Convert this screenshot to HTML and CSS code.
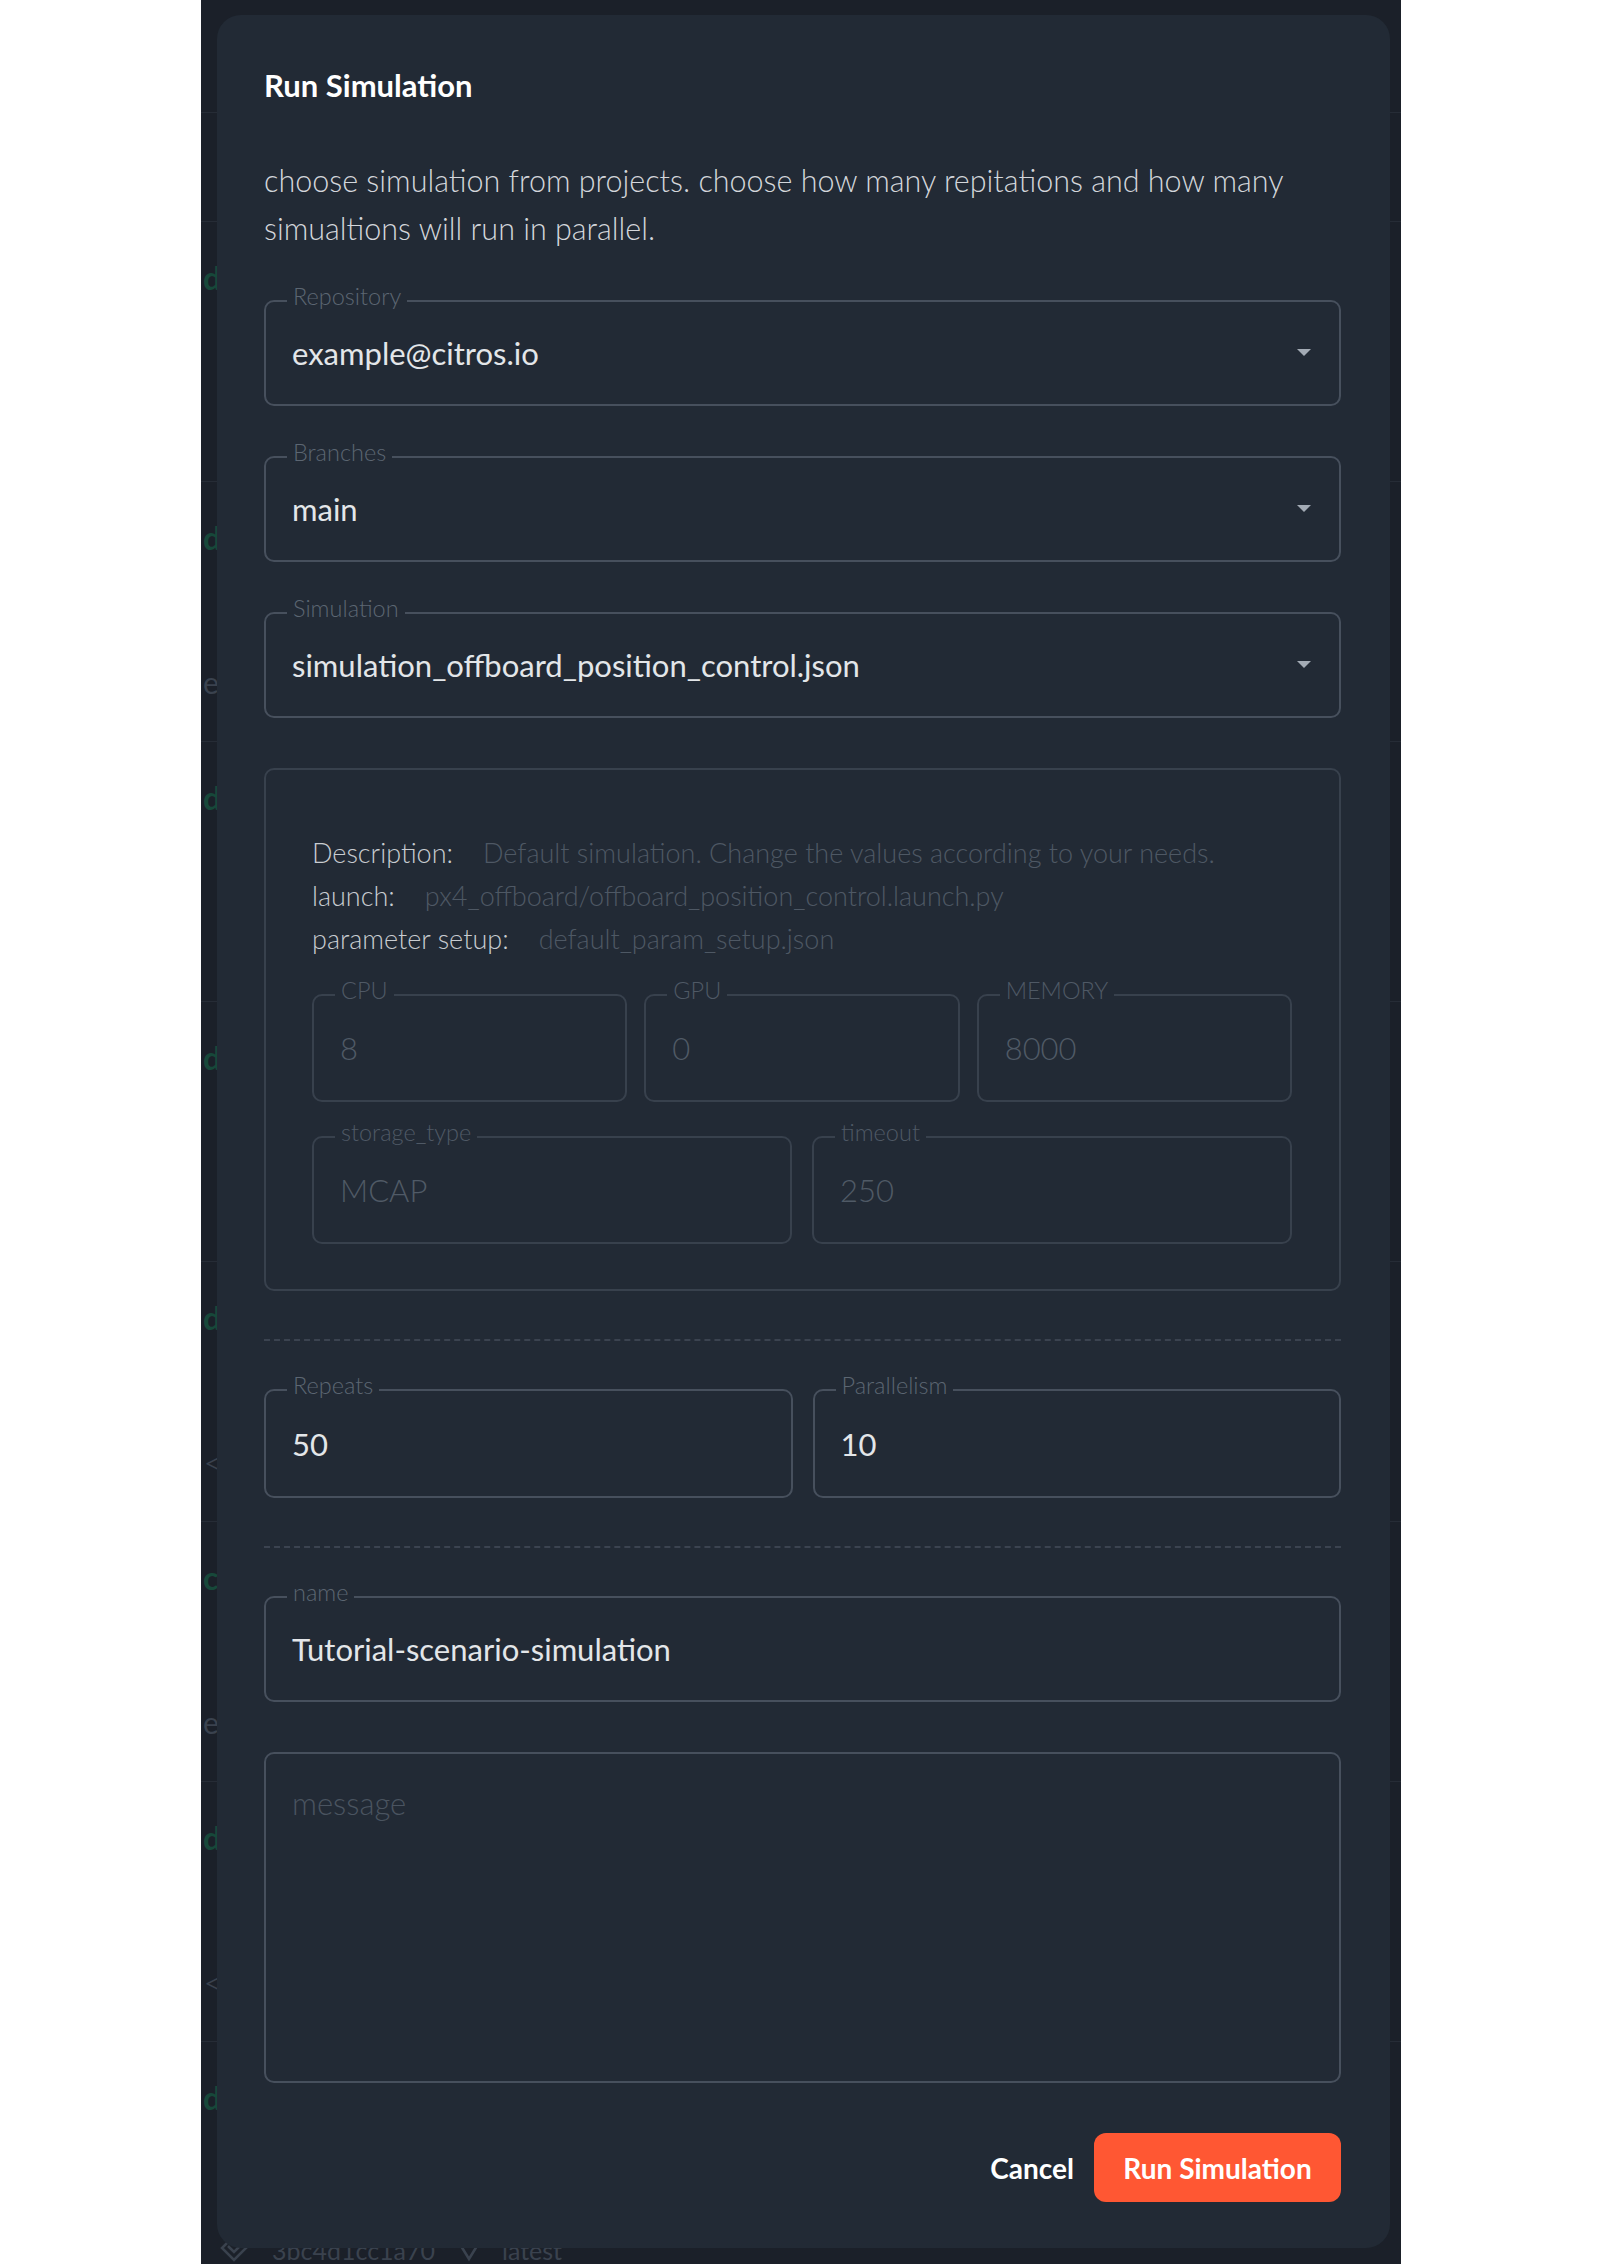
FILE: index.html
```html
<!DOCTYPE html>
<html lang="en">
<head>
<meta charset="utf-8">
<title>Run Simulation</title>
<link rel="stylesheet" href="styles.css">
</head>
<body>
<div class="screen">
  <div class="bg-list">
    <div class="bg-head"></div>
    <div class="bg-row bg-first"></div>
    <div class="bg-row"><div class="bg-status">d</div><div class="bg-meta"></div></div>
    <div class="bg-row"><div class="bg-status">d</div><div class="bg-meta">e</div></div>
    <div class="bg-row"><div class="bg-status">d</div><div class="bg-meta"></div></div>
    <div class="bg-row"><div class="bg-status">d</div><div class="bg-meta"></div></div>
    <div class="bg-row"><div class="bg-status">d</div><div class="bg-meta bg-chev">&lt;</div></div>
    <div class="bg-row"><div class="bg-status">c</div><div class="bg-meta">e</div></div>
    <div class="bg-row"><div class="bg-status">d</div><div class="bg-meta bg-chev">&lt;</div></div>
    <div class="bg-row">
      <div class="bg-status">d</div>
      <div class="bg-meta bg-meta-full">
        <svg class="bg-icon" viewBox="0 0 32 32" width="32" height="32"><path d="M16 2 L4 14 L16 26 L28 14 Z M10 12 L16 18 L22 12" fill="none" stroke="#3a424e" stroke-width="2.5"/></svg>
        <span class="bg-hash">3bc4d1cc1a70</span>
        <svg class="bg-icon-v" viewBox="0 0 26 26" width="26" height="26"><path d="M2 4 L13 22 L24 4" fill="none" stroke="#3a424e" stroke-width="2.5"/></svg>
        <span class="bg-tag">latest</span>
      </div>
    </div>
  </div>

  <div class="modal">
    <h2 class="title">Run Simulation</h2>
    <p class="desc">choose simulation from projects. choose how many repitations and how many simualtions will run in parallel.</p>

    <div class="form">
      <div class="field">
        <span class="field-label">Repository</span>
        <span class="field-value">example@citros.io</span>
        <svg class="caret" viewBox="0 0 14 8" width="14" height="8"><path d="M0 0 H14 L7 7 Z" fill="#a3abb5"/></svg>
      </div>
      <div class="field">
        <span class="field-label">Branches</span>
        <span class="field-value">main</span>
        <svg class="caret" viewBox="0 0 14 8" width="14" height="8"><path d="M0 0 H14 L7 7 Z" fill="#a3abb5"/></svg>
      </div>
      <div class="field">
        <span class="field-label">Simulation</span>
        <span class="field-value">simulation_offboard_position_control.json</span>
        <svg class="caret" viewBox="0 0 14 8" width="14" height="8"><path d="M0 0 H14 L7 7 Z" fill="#a3abb5"/></svg>
      </div>

      <div class="info">
        <div class="info-line"><span class="info-key">Description:</span><span class="info-val">Default simulation. Change the values according to your needs.</span></div>
        <div class="info-line"><span class="info-key">launch:</span><span class="info-val">px4_offboard/offboard_position_control.launch.py</span></div>
        <div class="info-line"><span class="info-key">parameter setup:</span><span class="info-val">default_param_setup.json</span></div>
        <div class="grid3">
          <div class="field disabled"><span class="field-label">CPU</span><span class="field-value">8</span></div>
          <div class="field disabled"><span class="field-label">GPU</span><span class="field-value">0</span></div>
          <div class="field disabled"><span class="field-label">MEMORY</span><span class="field-value">8000</span></div>
        </div>
        <div class="grid2">
          <div class="field disabled"><span class="field-label">storage_type</span><span class="field-value">MCAP</span></div>
          <div class="field disabled"><span class="field-label">timeout</span><span class="field-value">250</span></div>
        </div>
      </div>

      <hr class="dash">

      <div class="pair">
        <div class="field"><span class="field-label">Repeats</span><span class="field-value">50</span></div>
        <div class="field"><span class="field-label">Parallelism</span><span class="field-value">10</span></div>
      </div>

      <hr class="dash">

      <div class="field">
        <span class="field-label">name</span>
        <span class="field-value">Tutorial-scenario-simulation</span>
      </div>

      <div class="field message">
        <span class="placeholder">message</span>
      </div>

      <div class="actions">
        <button class="btn-cancel" type="button">Cancel</button>
        <button class="btn-run" type="button">Run Simulation</button>
      </div>
    </div>
  </div>
</div>
</body>
</html>
```

FILE: styles.css
```css
html, body {
  margin: 0;
  padding: 0;
  background: #ffffff;
}

.screen {
  margin-left: 201px;
  width: 1200px;
  height: 2264px;
  position: relative;
  overflow: hidden;
  background: #1b2029;
  font-family: Lato, "Noto Sans", sans-serif;
}

/* dimmed application behind the dialog */
.bg-list {
  display: flex;
  flex-direction: column;
}
.bg-head {
  height: 112px;
  border-bottom: 1px solid #262c36;
}
.bg-row {
  height: 259px;
  border-bottom: 1px solid #262c36;
  padding-left: 2px;
  box-sizing: content-box;
}
.bg-first {
  height: 108px;
}
.bg-status {
  margin-top: 36px;
  font-size: 32px;
  line-height: 40px;
  color: #17483a;
  font-weight: 700;
}
.bg-meta {
  margin-top: 104px;
  height: 40px;
  font-size: 30px;
  line-height: 40px;
  color: #3a424e;
}
.bg-chev {
  font-size: 40px;
  font-weight: 300;
}
.bg-meta-full {
  display: flex;
  align-items: center;
  padding-left: 15px;
  margin-top: 112px;
}
.bg-icon {
  flex: none;
  margin-right: 22px;
}
.bg-icon-v {
  flex: none;
  margin: 0 20px 0 21px;
}
.bg-hash, .bg-tag {
  font-size: 25px;
}

/* dialog */
.modal {
  position: absolute;
  left: 16px;
  top: 15px;
  width: 1173px;
  height: 2233px;
  box-sizing: border-box;
  padding: 52px 49px 0 47px;
  background: #222a35;
  border-radius: 24px;
}

.title {
  margin: 0;
  font-size: 31px;
  line-height: 36px;
  font-weight: 700;
  color: #ffffff;
}

.desc {
  margin: 53px 0 0;
  font-family: "Lato Light", Lato, "Noto Sans", sans-serif;
  font-size: 30.5px;
  line-height: 48px;
  font-weight: 300;
  color: #d3d6db;
}

.form {
  margin-top: 48px;
  display: flex;
  flex-direction: column;
  gap: 50px;
}

.field {
  position: relative;
  height: 106px;
  box-sizing: border-box;
  border: 2px solid #47505d;
  border-radius: 10px;
  display: flex;
  align-items: center;
  padding: 0 28px 0 26px;
}

.field-label {
  position: absolute;
  top: -18px;
  left: 21px;
  padding: 0 6px;
  font-family: "Lato Light", Lato, "Noto Sans", sans-serif;
  font-size: 23.5px;
  line-height: 24px;
  font-weight: 300;
  color: #5c6672;
  background: #222a35;
}

.field-value {
  flex: 1;
  font-size: 31px;
  line-height: 36px;
  color: #e3e6e9;
}

.caret {
  flex: none;
}

.info {
  border: 2px solid #38414d;
  border-radius: 10px;
  padding: 61px 47px 45px 46px;
}

.info-line {
  display: flex;
  font-family: "Lato Light", Lato, "Noto Sans", sans-serif;
  font-size: 27px;
  line-height: 43px;
  font-weight: 300;
  white-space: nowrap;
}
.info-key {
  color: #c8ccd1;
  margin-right: 30px;
}
.info-val {
  color: #4e5864;
}

.grid3 {
  margin-top: 34px;
  display: grid;
  grid-template-columns: repeat(3, 1fr);
  column-gap: 17px;
}
.grid2 {
  margin-top: 34px;
  display: grid;
  grid-template-columns: 1fr 1fr;
  column-gap: 20px;
}

.field.disabled {
  height: 108px;
  border-color: #38414d;
}
.field.disabled .field-label {
  color: #4f5965;
}
.field.disabled .field-value {
  font-family: "Lato Light", Lato, "Noto Sans", sans-serif;
  font-weight: 300;
  color: #505a66;
}

.dash {
  margin: -2px 0;
  height: 0;
  border: 0;
  border-top: 2px dashed #3b4350;
}

.pair {
  display: grid;
  grid-template-columns: 1fr 1fr;
  column-gap: 20px;
}
.pair .field {
  height: 109px;
}

.field.message {
  height: 331px;
  align-items: flex-start;
  padding-top: 31px;
}
.placeholder {
  font-family: "Lato Light", Lato, "Noto Sans", sans-serif;
  font-size: 31px;
  line-height: 36px;
  font-weight: 300;
  color: #4a5460;
}

.actions {
  display: flex;
  justify-content: flex-end;
  align-items: center;
  gap: 4px;
}

.btn-cancel,
.btn-run {
  font-family: Lato, "Noto Sans", sans-serif;
  font-size: 28px;
  font-weight: 700;
  height: 69px;
  border: 0;
  cursor: pointer;
}
.btn-cancel {
  background: none;
  color: #ffffff;
  padding: 0 16px;
}
.btn-run {
  width: 247px;
  background: #ff5733;
  color: #ffffff;
  border-radius: 12px;
  padding: 0;
}
```
